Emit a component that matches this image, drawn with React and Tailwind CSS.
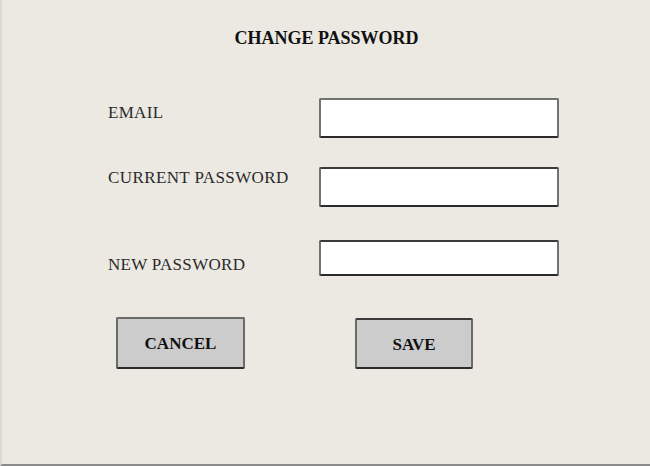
export default function App() {
  const serif = { fontFamily: '"Liberation Serif", "Times New Roman", serif' }

  return (
    <div className="w-[650px] h-[466px] bg-white overflow-hidden" style={serif}>
      <div className="h-[466px] bg-[#ece9e3] border-l-2 border-l-[#dcdad6] border-b-2 border-b-[#8a8a8a] flex flex-col">
        {/* Title */}
        <h1 className="pt-[27px] text-center text-[18px] leading-[22px] font-bold text-[#111] pl-[1px]">CHANGE PASSWORD</h1>

        {/* Fields */}
        <div className="pl-[106px] flex flex-col">
          <div className="flex mt-[49px]">
            <label className="w-[211px] pt-[5px] text-[17px] leading-[20px] text-[#2a2a2a] tracking-[0.3px]">EMAIL</label>
            <div className="w-[240px] h-[40px] bg-white border-2 border-[#727272] border-b-[#2a2a2a] rounded-[2px]" />
          </div>
          <div className="flex mt-[29px]">
            <label className="w-[211px] pt-[1px] text-[17px] leading-[20px] text-[#2a2a2a] tracking-[0.4px]">CURRENT PASSWORD</label>
            <div className="w-[240px] h-[40px] bg-white border-2 border-[#727272] border-b-[#2a2a2a] border-t-[#3a3a3a] rounded-[2px]" />
          </div>
          <div className="flex mt-[33px]">
            <label className="w-[211px] pt-[15px] text-[17px] leading-[20px] text-[#2a2a2a] tracking-[0.3px]">NEW PASSWORD</label>
            <div className="w-[240px] h-[36px] bg-white border-2 border-[#727272] border-t-[#3a3a3a] border-b-[#2a2a2a] rounded-[2px]" />
          </div>
        </div>

        {/* Buttons */}
        <div className="flex items-start pl-[114px] mt-[41px]">
          <button className="w-[129px] h-[52px] bg-[#cccccc] border-2 border-[#6a6a6a] border-b-[#2a2a2a] rounded-[2px] text-[17px] font-bold text-[#111] pt-[2px]">CANCEL</button>
          <button className="ml-[110px] mt-[1px] w-[118px] h-[51px] bg-[#cccccc] border-2 border-[#6a6a6a] border-t-[#3a3a3a] border-b-[#2a2a2a] rounded-[2px] text-[17px] font-bold text-[#111] pt-[3px]">SAVE</button>
        </div>
      </div>
    </div>
  )
}
